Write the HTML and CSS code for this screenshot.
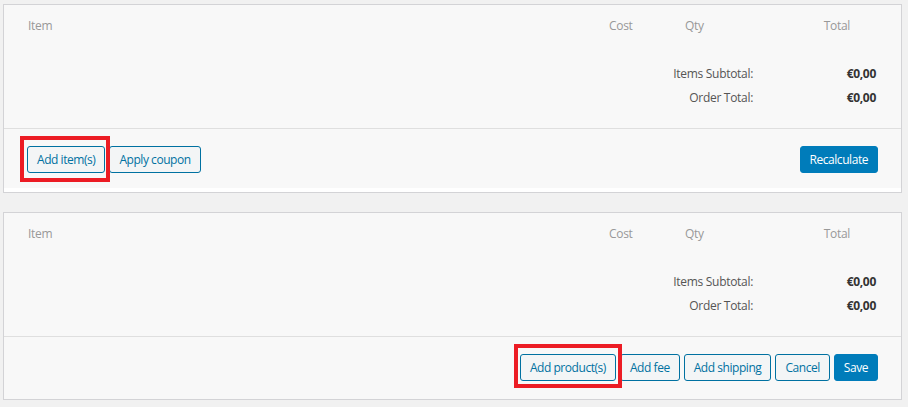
FILE: index.html
```html
<!DOCTYPE html>
<html lang="en">
<head>
<meta charset="utf-8">
<title>Order items</title>
<link rel="stylesheet" href="styles.css">
</head>
<body>
<div class="page">
  <section class="panel panel-first">
    <div class="items-head">
      <span class="col-item">Item</span>
      <span class="col-cost">Cost</span>
      <span class="col-qty">Qty</span>
      <span class="col-total">Total</span>
    </div>
    <div class="totals">
      <div class="total-row"><span class="label">Items Subtotal:</span><span class="amount">€0,00</span></div>
      <div class="total-row"><span class="label">Order Total:</span><span class="amount">€0,00</span></div>
    </div>
    <div class="actions">
      <div class="btn-group">
        <span class="mark"><button class="btn">Add item(s)</button><span class="highlight"></span></span>
        <button class="btn">Apply coupon</button>
      </div>
      <div class="btn-group">
        <button class="btn btn-primary">Recalculate</button>
      </div>
    </div>
  </section>

  <section class="panel panel-second">
    <div class="items-head">
      <span class="col-item">Item</span>
      <span class="col-cost">Cost</span>
      <span class="col-qty">Qty</span>
      <span class="col-total">Total</span>
    </div>
    <div class="totals">
      <div class="total-row"><span class="label">Items Subtotal:</span><span class="amount">€0,00</span></div>
      <div class="total-row"><span class="label">Order Total:</span><span class="amount">€0,00</span></div>
    </div>
    <div class="actions actions-end">
      <div class="btn-group">
        <span class="mark"><button class="btn">Add product(s)</button><span class="highlight highlight-2"></span></span>
        <button class="btn">Add fee</button>
        <button class="btn">Add shipping</button>
        <button class="btn">Cancel</button>
        <button class="btn btn-primary">Save</button>
      </div>
    </div>
  </section>
</div>
</body>
</html>
```

FILE: styles.css
```css
* { box-sizing: border-box; }

html, body {
  margin: 0;
  background: #f1f1f1;
}

body {
  font-family: "Open Sans", "Noto Sans", Arial, sans-serif;
  font-size: 12px;
  letter-spacing: -0.3px;
  color: #444;
}

.page {
  padding: 4px 6px 0 3px;
}

.panel {
  border: 1px solid #d3d3d6;
  background: #fff;
}

.panel-first {
  padding-bottom: 4px;
}

.panel-second {
  margin-top: 19px;
}

.items-head {
  display: grid;
  grid-template-columns: 1fr 76px 80px 85px;
  padding: 9px 51px 0 24px;
  line-height: 24px;
  color: #999;
  background: #f8f8f8;
}

.col-total { text-align: right; }

.totals {
  background: #f8f8f8;
  padding: 24px 25px 18px 0;
  border-bottom: 1px solid #dfdfdf;
}

.total-row {
  display: grid;
  grid-template-columns: 1fr 123px;
  line-height: 24px;
}

.label {
  text-align: right;
  color: #555;
}

.amount {
  text-align: right;
  font-weight: 700;
  color: #333;
}

.actions {
  display: flex;
  justify-content: space-between;
  align-items: center;
  padding: 17px 23px 15px 23px;
  background: #f8f8f8;
}

.panel-second .actions {
  padding-bottom: 18px;
}

.actions-end {
  justify-content: flex-end;
}

.btn-group {
  display: flex;
  gap: 4px;
  align-items: center;
}

.mark {
  position: relative;
  display: inline-flex;
}

.btn {
  font-family: inherit;
  font-size: 12px;
  letter-spacing: -0.45px;
  height: 27px;
  padding: 0 9px;
  border: 1px solid #0071a1;
  border-radius: 3px;
  background: #f3f5f6;
  color: #0071a1;
  cursor: pointer;
  line-height: 25px;
}

.btn-primary {
  background: #007cba;
  border-color: #007cba;
  color: #fff;
}

.highlight {
  position: absolute;
  top: -10px;
  bottom: -9px;
  left: -7px;
  right: -5px;
  border: 4px solid #ec1c24;
  pointer-events: none;
}

.highlight-2 {
  bottom: -7px;
  left: -6px;
  right: -6px;
}
```
